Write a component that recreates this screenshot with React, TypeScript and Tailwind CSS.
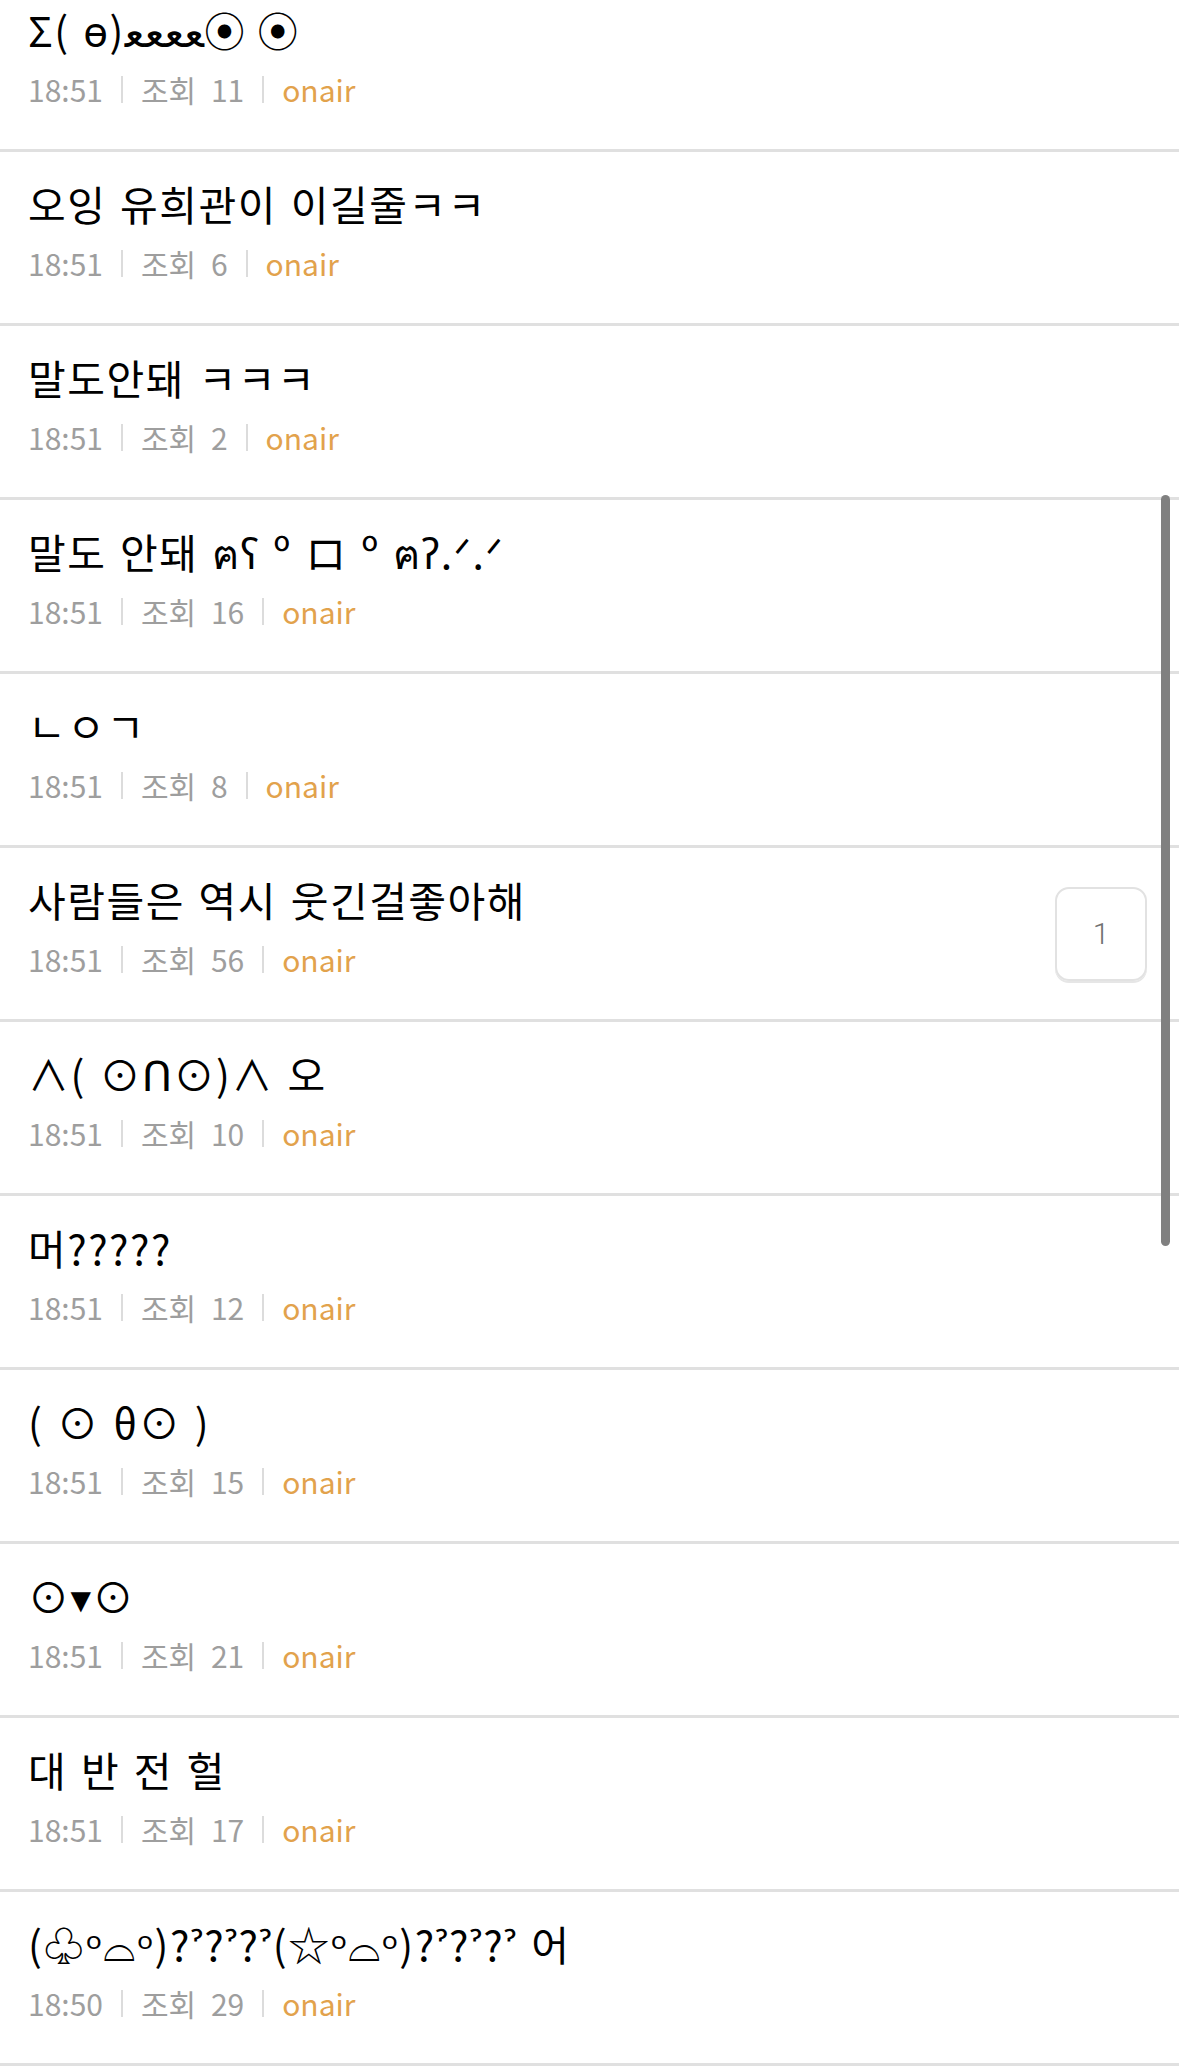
import React from 'react';

type Post = {
  id: number;
  title: string;
  time: string;
  views: number;
  comments?: number;
};

const posts: Post[] = [
  { id: 1, title: 'Σ( ɵ)ﻌﻌﻌﻌ⦿ ⦿', time: '18:51', views: 11 },
  { id: 2, title: '오잉 유희관이 이길줄ㅋㅋ', time: '18:51', views: 6 },
  { id: 3, title: '말도안돼 ㅋㅋㅋ', time: '18:51', views: 2 },
  { id: 4, title: '말도 안돼 ฅʕ º ロ º ฅʔ.ᐟ.ᐟ', time: '18:51', views: 16 },
  { id: 5, title: 'ㄴㅇㄱ', time: '18:51', views: 8 },
  { id: 6, title: '사람들은 역시 웃긴걸좋아해', time: '18:51', views: 56, comments: 1 },
  { id: 7, title: '∧( ⊙Ո⊙)∧ 오', time: '18:51', views: 10 },
  { id: 8, title: '머?????', time: '18:51', views: 12 },
  { id: 9, title: '( ⊙ θ⊙ )', time: '18:51', views: 15 },
  { id: 10, title: '⊙▾⊙', time: '18:51', views: 21 },
  { id: 11, title: '대 반 전 헐', time: '18:51', views: 17 },
  { id: 12, title: '(♧ᵒ⌓ᵒ)?ˀ?ˀ?ˀ(☆ᵒ⌓ᵒ)?ˀ?ˀ?ˀ 어', time: '18:50', views: 29 },
];

const font = { fontFamily: '"Noto Sans CJK KR", "Noto Sans", "DejaVu Sans", sans-serif' };

const Separator = () => <span className="w-[2px] h-[27px] bg-[#dcdcdc]" />;

const PostRow = ({ post }: { post: Post }) => (
  <div className="flex justify-between h-[174px] border-b-[3px] border-[#e0e0e0] pl-[28px] pr-[32px]">
    <div className="flex flex-col pt-[26px] min-w-0">
      <div className="text-[41px] leading-[50px] tracking-[1.5px] [word-spacing:3px] text-black whitespace-nowrap">
        {post.title}
      </div>
      <div className="mt-[15px] flex items-center gap-[18px] text-[30px] leading-[40px] [word-spacing:8px] text-[#9e9e9e]">
        <span>{post.time}</span>
        <Separator />
        <span>조회 {post.views}</span>
        <Separator />
        <span className="text-[#e2a24c]">onair</span>
      </div>
    </div>
    {post.comments !== undefined && (
      <div className="self-center w-[92px] h-[94px] rounded-[14px] border-2 border-[#e2e2e2] shadow-[0_2px_0_#e6e6e6] flex items-center justify-center font-[Roboto] font-light text-[30px] text-[#707070]">
        {post.comments}
      </div>
    )}
  </div>
);

export default function App() {
  return (
    <div className="relative bg-white min-h-[2071px] overflow-hidden" style={font}>
      <div className="-mt-[22px]">
        {posts.map((p) => (
          <PostRow key={p.id} post={p} />
        ))}
      </div>
      {/* scroll indicator */}
      <div className="absolute left-[1161px] top-[495px] w-[9px] h-[751px] rounded-full bg-[#808080]" />
    </div>
  );
}
